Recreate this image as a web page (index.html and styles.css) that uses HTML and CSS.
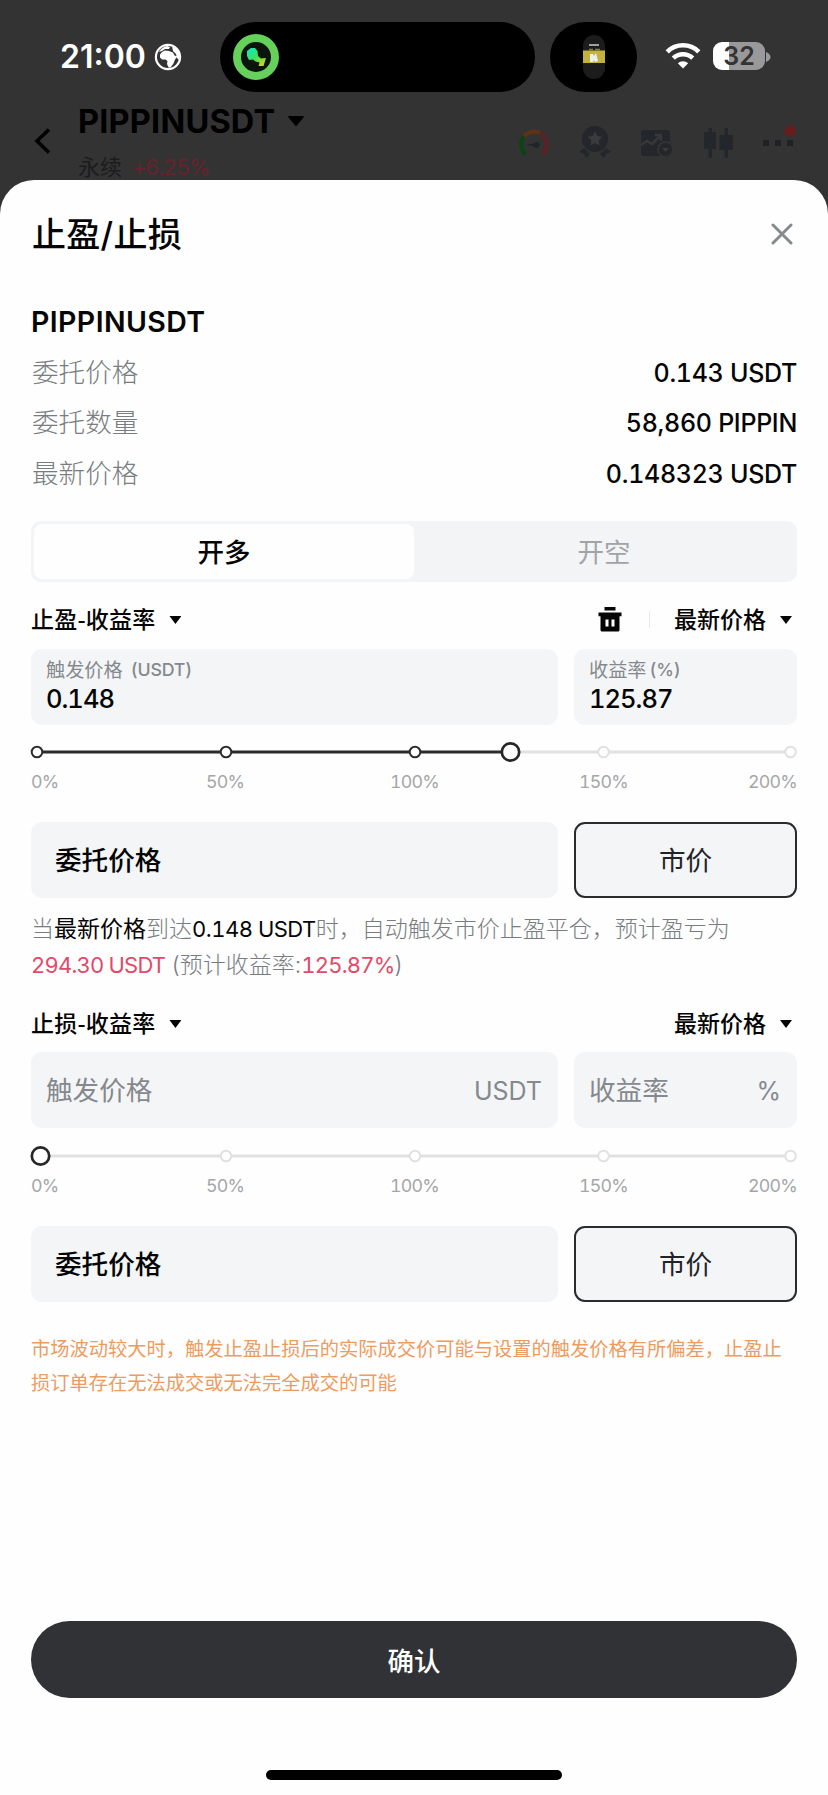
FILE: index.html
```html
<!DOCTYPE html>
<html lang="zh-CN">
<head>
<meta charset="utf-8">
<title>止盈/止损</title>
<link rel="stylesheet" href="styles.css">
</head>
<body>
<div class="screen">
  <div class="backdrop">
    <div class="status">
      <span class="time">21:00</span>
      <svg class="globe" width="28" height="28" viewBox="0 0 28 28"><circle cx="14" cy="14" r="13.200" fill="#fff"/><circle cx="14" cy="14" r="11" fill="#333"/><path d="M6 11.500l2-2.500 3-1.500 4 .5 4 1.500 1.500 3 3 1-2.500 3-1.500 4-3 4h-2l-1.500-3.500.5-3-2-1.500H8l-2-2z" fill="#fff"/><path d="M5 9q3-5 8-6l3 1-1 2-4 0-3 2zM18 3l5 3 3 6-1 5-2-2-1-4-3-3z" fill="#fff"/></svg>
      <div class="island">
        <svg width="46" height="46" viewBox="0 0 46 46"><defs><linearGradient id="flow" x1="0" y1="0" x2="1" y2="1"><stop offset="0" stop-color="#10e8c4"/><stop offset=".5" stop-color="#3be35c"/><stop offset="1" stop-color="#f6d20a"/></linearGradient></defs><circle cx="23" cy="23" r="19" fill="#0b150b" stroke="#65d05a" stroke-width="8"/><path d="M14 17l4-3 4 0 2.500 3 .5 5 3 2.500 5-.5-2.500 8h-5l1-3.500-4-1-2.500-2-4 .5-2-4z" fill="url(#flow)"/></svg>
      </div>
      <div class="island-small">
        <svg width="22" height="44" viewBox="0 0 22 44"><rect width="22" height="44" rx="11" fill="#1c1c1c"/><path d="M6 10h10" stroke="#ccc" stroke-width="1.500"/><path d="M6 14.500h4M12 14.500h5" stroke="#857c3f" stroke-width="1.500"/><rect y="15.500" width="22" height="12.500" fill="#c2b33c"/><path d="M7 19h3l1 2 2-3 2 8-3 1-1-2-1 2H7z" fill="#eee"/></svg>
      </div>
      <svg class="wifi" width="36" height="27" viewBox="0 0 36 27"><g fill="none" stroke="#fff" stroke-width="4.600"><path d="M2.200 9.800a22.500 22.500 0 0 1 31.600 0"/><path d="M8.300 16.100a14 14 0 0 1 19.400 0"/></g><path d="M18 26.500l-5.200-5.300a7.600 7.600 0 0 1 10.400 0z" fill="#fff"/></svg>
      <div class="battery"><span>32</span></div>
      <svg class="nub" width="5" height="10" viewBox="0 0 5 10"><path d="M0 0q4.500 2 4.500 5T0 10z" fill="#999"/></svg>
    </div>
    <div class="nav">
      <svg class="back" width="17" height="26" viewBox="0 0 17 26"><path d="M15 1.500L3 13l12 11.500" fill="none" stroke="#000" stroke-width="3.600"/></svg>
      <div class="pair">
        <div class="pair-name"><span>PIPPINUSDT</span><svg width="16" height="10" viewBox="0 0 16 10"><path d="M1 0h14q1.500.3.5 1.500L9 9.300q-1 1-2 0L.5 1.500Q-.5.300 1 0z"/></svg></div>
        <div class="pair-sub">永续 <span class="chg">+6.25%</span></div>
      </div>
      <div class="tools">
        <svg width="34" height="34" viewBox="0 0 34 34" fill="none" stroke-width="4.300"><path d="M8.500 29.500A13.300 13.300 0 0 1 7 11.500" stroke="#0b4414"/><path d="M7 11.500A13.300 13.300 0 0 1 23.500 8.300" stroke="#5c3218"/><path d="M23.500 8.300A13.300 13.300 0 0 1 25.500 29.500" stroke="#5a2226"/><path d="M9 19.500l8-1a3 3 0 1 1 0 3z" fill="#202428"/></svg>
        <svg width="34" height="34" viewBox="0 0 34 34"><circle cx="17" cy="14" r="13" fill="#23262a"/><path d="M17 6.500l2.300 4.600 5 .7-3.600 3.600.8 5-4.500-2.300-4.500 2.300.8-5-3.600-3.600 5-.7z" fill="#3a3b3d"/><path d="M1 27l5-4 6 6-4 4-2-4zM33 27l-5-4-6 6 4 4 2-4z" fill="#23262a"/></svg>
        <svg width="34" height="34" viewBox="0 0 34 34"><rect x="2" y="5" width="29" height="26" rx="3" fill="#23262a"/><path d="M2 20l6-4 5 3 8-8M16 10h6v6" fill="none" stroke="#363738" stroke-width="2.600"/><circle cx="26.500" cy="24.500" r="8.500" fill="#333"/><circle cx="26.500" cy="24.500" r="6.500" fill="#23262a"/><path d="M23 23h7l-3.500 4z" fill="#3a3b3d"/></svg>
        <svg width="34" height="34" viewBox="0 0 34 34" fill="#23262a"><path d="M7.500 3h3.500v4h4v17h-4v9H7.500v-9H3V7h4.500z"/><path d="M23.500 3h3.500v7h5v15h-5v8h-3.500v-8h-5V10h5z"/></svg>
        <svg width="34" height="34" viewBox="0 0 34 34"><path d="M1 15h6v6H1zM13 15h6v6h-6zM25 15h6v6h-6z" fill="#1f2124"/><circle cx="28" cy="6" r="5.500" fill="#6a1c1c"/></svg>
      </div>
    </div>
  </div>

  <main class="sheet">
    <header class="sheet-head">
      <h1>止盈/止损</h1>
      <svg width="22" height="22" viewBox="0 0 22 22"><path d="M2 2l18 18M20 2L2 20" stroke="#858a8c" stroke-width="3" stroke-linecap="round"/></svg>
    </header>
    <h2>PIPPINUSDT</h2>
    <dl class="info">
      <div><dt>委托价格</dt><dd>0.143 USDT</dd></div>
      <div><dt>委托数量</dt><dd>58,860 PIPPIN</dd></div>
      <div><dt>最新价格</dt><dd>0.148323 USDT</dd></div>
    </dl>
    <div class="segment"><span class="on">开多</span><span>开空</span></div>

    <div class="pick first">
      <span>止盈-收益率</span><i class="caret"></i>
      <svg class="trash" width="24" height="25" viewBox="0 0 24 25"><path d="M6.500 0h11v3.500h-11zM.5 5.500h23v3.700h-2V23q0 1.500-1.500 1.500H4Q2.500 24.500 2.500 23V9.200h-2z" fill="#050505"/><path d="M7.500 12.500h3v7h-3zM13.500 12.500h3v7h-3z" fill="#fff"/></svg>
      <i class="rule"></i>
      <span>最新价格</span><i class="caret"></i>
    </div>
    <div class="fields">
      <div class="field filled"><small>触发价格 <b>(USDT)</b></small><strong>0.148</strong></div>
      <div class="field filled"><small>收益率 <b class="tight">(%)</b></small><strong>125.87</strong></div>
    </div>
    <svg class="slider upper" width="770" height="22" viewBox="0 0 770 22">
      <path d="M480 11H759" stroke="#e1e1e1" stroke-width="3"/><path d="M8 11H480" stroke="#2d2b2d" stroke-width="3.200"/>
      <g fill="#fff" stroke="#2d2b2d" stroke-width="2"><circle cx="8" cy="11" r="5.300"/><circle cx="197" cy="11" r="5.300"/><circle cx="386" cy="11" r="5.300"/></g>
      <g fill="#fff" stroke="#e1e1e1" stroke-width="2"><circle cx="574.500" cy="11" r="5.300"/><circle cx="761.500" cy="11" r="5.300"/></g>
      <circle cx="481.500" cy="11" r="8.700" fill="#fff" stroke="#262528" stroke-width="2.700"/>
    </svg>
    <div class="scale"><span>0%</span><span>50%</span><span>100%</span><span>150%</span><span>200%</span></div>
    <div class="fields order"><div class="field price">委托价格</div><div class="field market">市价</div></div>
    <p class="note">当<em>最新价格</em>到达<em class="num">0.148 USDT</em>时，自动触发市价止盈平仓，预计盈亏为<br><span class="red num">294.30 USDT</span> (预计收益率:<span class="red num">125.87%</span>)</p>

    <div class="pick second">
      <span>止损-收益率</span><i class="caret"></i>
      <span class="push">最新价格</span><i class="caret"></i>
    </div>
    <div class="fields">
      <div class="field empty"><span>触发价格</span><span class="unit">USDT</span></div>
      <div class="field empty"><span>收益率</span><span class="unit">%</span></div>
    </div>
    <svg class="slider" width="770" height="22" viewBox="0 0 770 22">
      <path d="M12 11H759" stroke="#e1e1e1" stroke-width="3"/>
      <g fill="#fff" stroke="#e1e1e1" stroke-width="2"><circle cx="197" cy="11" r="5.300"/><circle cx="386" cy="11" r="5.300"/><circle cx="574.500" cy="11" r="5.300"/><circle cx="761.500" cy="11" r="5.300"/></g>
      <circle cx="11.500" cy="11" r="8.700" fill="#fff" stroke="#262528" stroke-width="2.700"/>
    </svg>
    <div class="scale"><span>0%</span><span>50%</span><span>100%</span><span>150%</span><span>200%</span></div>
    <div class="fields order"><div class="field price">委托价格</div><div class="field market">市价</div></div>
    <p class="warn">市场波动较大时，触发止盈止损后的实际成交价可能与设置的触发价格有所偏差，止盈止<br>损订单存在无法成交或无法完全成交的可能</p>
    <button class="confirm">确认</button>
    <div class="home"></div>
  </main>
</div>
</body>
</html>
```

FILE: styles.css
```css
* { box-sizing: border-box; margin: 0; padding: 0; }
body { background: #333; font-family: Inter, "Noto Sans CJK SC", sans-serif; font-feature-settings: "tnum"; color: #050505; }
svg { display: block; flex: none; }
.screen { width: 828px; height: 1795px; display: flex; flex-direction: column; overflow: hidden; }
.backdrop { height: 180px; flex: none; overflow: hidden; }

.status { display: flex; align-items: center; height: 92px; padding: 22px 0 0 60px; }
.time { width: 94px; font-size: 32px; font-weight: 600; line-height: 40px; color: #fff; white-space: nowrap; font-feature-settings: normal; }
.island { width: 315px; height: 70px; margin-left: 38px; border-radius: 35px; background: #000; display: flex; align-items: center; padding-left: 13px; }
.island-small { width: 87px; height: 70px; margin-left: 15px; border-radius: 35px; background: #000; display: flex; align-items: center; justify-content: center; }
.wifi { margin: -4px 0 0 28px; }
.battery { width: 52px; height: 28px; margin: -2px 1px 0 12px; border-radius: 9px; background: linear-gradient(90deg, #fff 31%, #999 31%); display: flex; align-items: center; justify-content: center; font-size: 25px; font-weight: 600; color: #333; font-feature-settings: normal; }

.nav { display: flex; height: 88px; padding-left: 34px; }
.back { margin-top: 36px; }
.pair { margin-left: 27px; width: 350px; white-space: nowrap; }
.pair-name { display: flex; align-items: center; gap: 16px; height: 40px; margin-top: 9px; font-size: 32.500px; font-weight: 700; color: #000; }
.pair-name svg { margin-left: -3px; }
.pair-name span { letter-spacing: 0.2px; }
.pair-sub { display: flex; gap: 10px; margin-top: 11px; line-height: 30px; font-size: 22px; font-weight: 400; color: #1b1c1e; }
.chg { color: #65232d; letter-spacing: -1.2px; font-weight: 400; }
.tools { display: flex; gap: 27.200px; margin: 33px 0 0 89px; }

.sheet { flex: 1; background: #fefefe; border-radius: 34px 34px 0 0; padding: 0 31px; display: flex; flex-direction: column; }
.sheet-head { display: flex; justify-content: space-between; align-items: center; height: 50px; margin-top: 29px; padding-right: 4px; }
h1 { padding: 2px 0 0 1px; font-size: 34px; font-weight: 500; letter-spacing: 0.3px; line-height: 50px; }
h2 { height: 40px; margin: 43px 0 5px; line-height: 40px; font-size: 28.500px; font-weight: 600; letter-spacing: 0.4px; }
.info > div { display: flex; justify-content: space-between; height: 50.300px; line-height: 50px; font-size: 26.600px; }
.info dt { padding-left: 1px; font-weight: 300; color: #787d80; }
.info dd { padding-top: 1px; font-size: 25px; font-weight: 500; letter-spacing: -0.3px; }
.segment { display: flex; height: 61px; margin-top: 23px; padding: 3px; border-radius: 10px; background: #f2f4f6; }
.segment span { flex: 1; padding-top: 1px; border-radius: 8px; text-align: center; line-height: 55px; font-size: 26.500px; color: #a2a3a6; }
.segment .on { background: #fefefe; color: #050505; font-weight: 500; }

.pick { display: flex; align-items: center; height: 40px; padding-right: 5px; font-size: 23px; font-weight: 500; font-feature-settings: normal; }
.pick span { margin-top: -3px; }
.pick span:first-child { letter-spacing: 0.2px; font-family: "Noto Sans CJK SC", sans-serif; }
.pick.first { margin: 18px 0 9px; }
.pick.second { margin: 20px 0 8px; }
.caret { width: 12px; height: 8px; margin-left: 14px; background: #050505; clip-path: polygon(0 0, 100% 0, 50% 100%); }
.trash { margin-left: auto; }
.rule { width: 1px; height: 17px; margin: 0 24px 0 27px; background: #e8e8e8; }
.pick .push { margin-left: auto; }

.fields { display: grid; grid-template-columns: 527px 223px; gap: 16px; height: 76px; flex: none; }
.field { border-radius: 11px; background: #f4f5f7; }
.filled { padding: 5px 15px; }
.filled small { display: flex; gap: 8px; height: 31px; line-height: 32px; font-size: 19.200px; color: #85898d; }
.filled b { font-weight: 500; font-size: 17.800px; letter-spacing: -0.2px; }
.filled .tight { margin-left: -5px; }
.filled strong { display: block; height: 28px; line-height: 28px; font-size: 25.500px; font-weight: 500; letter-spacing: -1px; }
.slider { margin: 17px 0 0 -2px; }
.slider.upper { margin-top: 16px; }
.scale { display: grid; grid-template-columns: 175px 184px 189px 169px 50px; height: 24px; margin-top: 7px; line-height: 24px; font-size: 17.800px; letter-spacing: -0.8px; color: #a5a6a8; }
.order { margin-top: 28px; }
.price { padding-left: 24px; line-height: 76px; font-size: 26.600px; font-weight: 500; }
.market { border: 2px solid #2a2b2d; text-align: center; line-height: 72px; font-size: 26.600px; color: #222326; }
.note { margin-top: 13px; height: 73px; line-height: 36.500px; font-size: 23px; font-weight: 300; color: #787d80; white-space: nowrap; font-feature-settings: normal; }
.note em { font-style: normal; font-weight: 400; color: #050505; }
.note .num { font-size: 22px; letter-spacing: -0.8px; font-feature-settings: "tnum"; }
.note em.num { letter-spacing: -0.5px; }
.red { color: #e34a68; font-weight: 400; }
.empty { display: flex; justify-content: space-between; align-items: center; padding: 0 16px 2px 15px; font-size: 26.600px; color: #85898d; }
.unit { font-size: 25px; padding-top: 4px; }
.warn { margin-top: 30px; line-height: 34.500px; font-size: 19.250px; color: #ee9b5e; white-space: nowrap; }
.confirm { flex: none; height: 77px; margin-top: 220px; border: 0; border-radius: 38.500px; background: #303236; color: #fff; font: 500 26.500px Inter, "Noto Sans CJK SC", sans-serif; }
.home { flex: none; width: 296px; height: 10px; margin: 72px auto 0; border-radius: 5px; background: #000; }
```
